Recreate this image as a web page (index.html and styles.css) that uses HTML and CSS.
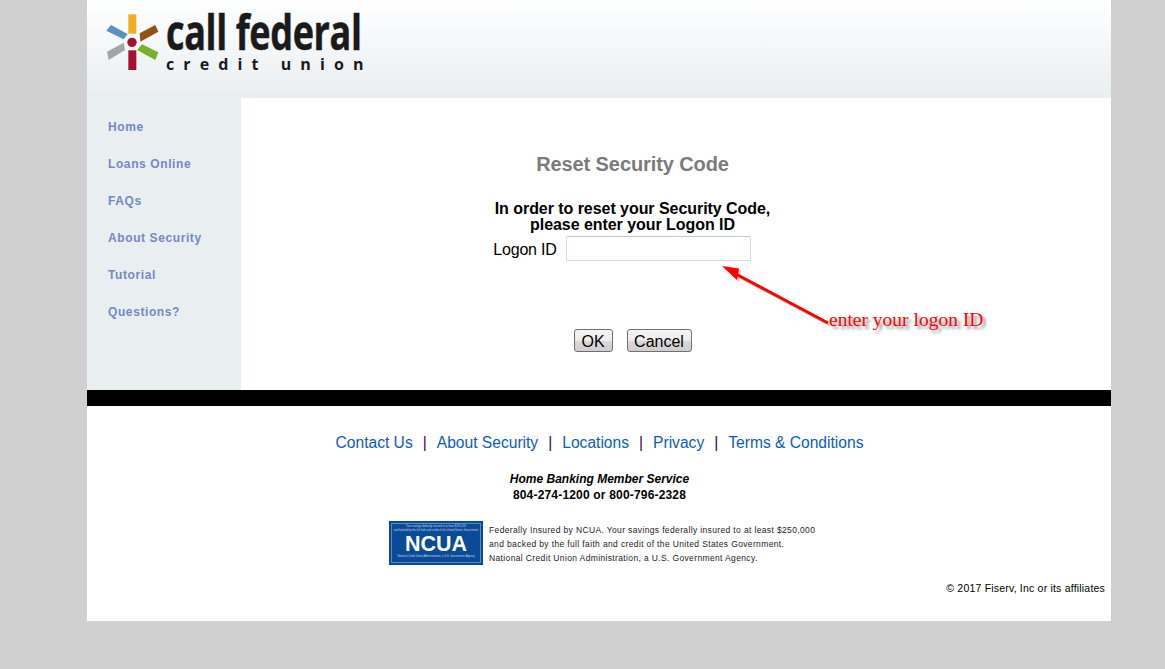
FILE: index.html
```html
<!DOCTYPE html>
<html lang="en">
<head>
<meta charset="utf-8">
<title>Reset Security Code</title>
<link rel="stylesheet" href="styles.css">
</head>
<body>
<div class="page">
  <header class="header">
    <div class="logo">
      <svg class="logo-mark" width="54" height="57" viewBox="57 42 162 171">
        <rect x="124" y="43" width="24" height="58" fill="#f3ad1e"/>
        <rect x="124" y="151" width="24" height="59" fill="#a8102f"/>
        <polygon points="158,100 205,75 214,95 160,125" fill="#8f5316"/>
        <polygon points="58,92 72,75 122,102 110,118" fill="#5b8fc6"/>
        <polygon points="60,155 110,128 114,150 65,180" fill="#a3a5a7"/>
        <polygon points="165,133 214,157 205,180 150,150" fill="#78b22c"/>
        <circle cx="135" cy="127" r="14" fill="#a8102f"/>
      </svg>
      <div class="logo-text">
        <div class="logo-name">call federal</div>
        <div class="logo-sub">credit union</div>
      </div>
    </div>
  </header>
  <div class="middle">
    <nav class="sidebar">
      <a class="nav-link" href="#">Home</a>
      <a class="nav-link" href="#">Loans Online</a>
      <a class="nav-link" href="#">FAQs</a>
      <a class="nav-link" href="#">About Security</a>
      <a class="nav-link" href="#">Tutorial</a>
      <a class="nav-link" href="#">Questions?</a>
    </nav>
    <main class="content">
      <h1 class="title">Reset Security Code</h1>
      <p class="intro">In order to reset your Security Code,<br>please enter your Logon ID</p>
      <div class="field">
        <label class="field-label" for="logon">Logon ID</label>
        <input class="field-input" id="logon" type="text">
      </div>
      <div class="buttons">
        <button class="btn btn-ok" type="button">OK</button>
        <button class="btn btn-cancel" type="button">Cancel</button>
      </div>
      <svg class="arrow" width="120" height="70" viewBox="0 0 120 70">
        <g class="arrow-shadow">
          <line x1="13" y1="8" x2="107" y2="58"/>
          <polygon points="1,1 18,3.500 16,15"/>
        </g>
        <g class="arrow-main">
          <line x1="13" y1="8" x2="107" y2="58"/>
          <polygon points="1,1 18,3.500 16,15"/>
        </g>
      </svg>
      <div class="annotation">enter your logon ID</div>
    </main>
  </div>
  <div class="rule"></div>
  <footer class="footer">
    <div class="footer-links">
      <a href="#">Contact Us</a><span class="sep">|</span><a href="#">About Security</a><span class="sep">|</span><a href="#">Locations</a><span class="sep">|</span><a href="#">Privacy</a><span class="sep">|</span><a href="#">Terms &amp; Conditions</a>
    </div>
    <div class="service">
      <div class="service-title">Home Banking Member Service</div>
      <div class="service-phone">804-274-1200 or 800-796-2328</div>
    </div>
    <div class="ncua">
      <div class="ncua-badge">
        <div class="ncua-fine">Your savings federally insured to at least $250,000<br>and backed by the full faith and credit of the United States Government</div>
        <div class="ncua-name">NCUA</div>
        <div class="ncua-fine">National Credit Union Administration, a U.S. Government Agency</div>
      </div>
      <div class="ncua-text">Federally Insured by NCUA. Your savings federally insured to at least $250,000<br>and backed by the full faith and credit of the United States Government.<br>National Credit Union Administration, a U.S. Government Agency.</div>
    </div>
    <div class="copyright">© 2017 Fiserv, Inc or its affiliates</div>
  </footer>
</div>
</body>
</html>
```

FILE: styles.css
```css
html, body { margin: 0; padding: 0; }
body {
  background: #d0d0d0;
  font-family: "Liberation Sans", Arial, sans-serif;
  color: #000;
  min-height: 669px;
}
.page { width: 1024px; margin-left: 87px; background: #fff; }
.header {
  height: 98px;
  background: linear-gradient(#ffffff, #e9eef1);
  box-sizing: border-box;
  padding: 14px 0 0 19px;
}
.logo { display: flex; gap: 6px; }
.logo-mark { flex: none; }
.logo-text { color: #1a1a1c; }
.logo-name {
  font-family: "Open Sans", sans-serif;
  font-weight: 700;
  font-size: 49px;
  line-height: 34px;
  letter-spacing: -0.5px;
  white-space: nowrap;
  transform: scaleX(0.735);
  transform-origin: left top;
  height: 34px;
  width: 194px;
  -webkit-text-stroke: 0.5px #1a1a1c;
}
.logo-sub {
  font-family: "Open Sans", sans-serif;
  font-weight: 700;
  font-size: 16px;
  line-height: 17px;
  letter-spacing: 9.100px;
  margin-top: 8px;
  white-space: nowrap;
}
.middle { display: flex; height: 292px; }
.sidebar {
  width: 154px;
  flex: none;
  background: #e9eef1;
  box-sizing: border-box;
  padding: 22px 0 0 21px;
  display: flex;
  flex-direction: column;
  gap: 22px;
}
.nav-link {
  font-size: 12px;
  line-height: 15px;
  font-weight: 700;
  letter-spacing: 0.6px;
  color: #7389c2;
  text-decoration: none;
}
.content {
  flex: 1;
  position: relative;
  display: flex;
  flex-direction: column;
  align-items: center;
  padding-top: 54px;
  box-sizing: border-box;
}
.title {
  margin: 0 0 25px -87px;
  font-size: 20px;
  line-height: 24px;
  font-weight: 700;
  letter-spacing: -0.1px;
  color: #7b7b7b;
}
.intro {
  margin: 0 0 0 -87px;
  font-size: 16px;
  line-height: 16px;
  font-weight: 700;
  letter-spacing: -0.05px;
  text-align: center;
}
.field {
  display: flex;
  align-items: center;
  margin: 3px 0 0 -108px;
  gap: 9px;
}
.field-label { font-size: 16px; padding-top: 2px; letter-spacing: -0.2px; }
.field-input {
  width: 185px;
  height: 25px;
  box-sizing: border-box;
  border: 1px solid #d5dbe6;
  border-top-color: #c4c8d2;
  border-radius: 2px;
  background: #fff;
  padding: 0;
}
.buttons { display: flex; gap: 14px; margin: 68px 0 0 -87px; }
.btn {
  height: 23px;
  box-sizing: border-box;
  padding: 2px 0 0;
  font-family: "Liberation Sans", Arial, sans-serif;
  font-size: 16px;
  color: #000;
  border: 1px solid #707070;
  border-radius: 3px;
  background: linear-gradient(#f4f4f4 0%, #ececec 50%, #d9d9d9 51%, #cfcfcf 100%);
}
.btn-ok { width: 39px; }
.btn-cancel { width: 65px; }
.arrow { position: absolute; left: 480px; top: 167px; }
.arrow line { stroke-width: 3px; }
.arrow-main { fill: #f00; }
.arrow-main line { stroke: #f00; }
.arrow-shadow { fill: #9a9a9a; opacity: 0.55; transform: translate(2px, 2px); }
.arrow-shadow line { stroke: #9a9a9a; }
.annotation {
  position: absolute;
  left: 588px;
  top: 211px;
  font-family: "Liberation Serif", "Times New Roman", serif;
  font-size: 19.500px;
  line-height: 22px;
  color: #f00;
  text-shadow: 3px 3px 3px #8a8a8a;
  white-space: nowrap;
}
.rule { height: 16px; background: #000; }
.footer { height: 215px; box-sizing: border-box; padding-top: 27px; }
.footer-links {
  display: flex;
  justify-content: center;
  margin-left: 1px;
  font-size: 15.600px;
  line-height: 19px;
  color: #330066;
}
.footer-links a { color: #0c5cb8; text-decoration: none; }
.sep { margin: 0 10px; }
.service {
  margin: 19px 0 0 1px;
  text-align: center;
  font-size: 12px;
  line-height: 16px;
  font-weight: 700;
}
.service-title { font-style: italic; }
.service-phone { letter-spacing: 0.18px; }
.ncua { display: flex; align-items: flex-start; margin: 18px 0 0 302px; gap: 6px; }
.ncua-badge {
  width: 94px;
  height: 44px;
  box-sizing: border-box;
  background: #0a4a96;
  outline: 1px solid #5f88bd;
  outline-offset: -3px;
  color: #fff;
  text-align: center;
  padding-top: 4px;
  overflow: hidden;
}
.ncua-fine { font-size: 2.700px; line-height: 4px; white-space: nowrap; color: #c8d6e8; }
.ncua-name { font-size: 21.500px; line-height: 23px; font-weight: 700; margin-bottom: -1px; }
.ncua-text {
  font-size: 8.500px;
  line-height: 14px;
  letter-spacing: 0.36px;
  color: #222;
  white-space: nowrap;
  padding-top: 2px;
}
.copyright {
  margin: 17px 6px 0 0;
  text-align: right;
  font-size: 10.500px;
  line-height: 13px;
  letter-spacing: 0.2px;
}
```
